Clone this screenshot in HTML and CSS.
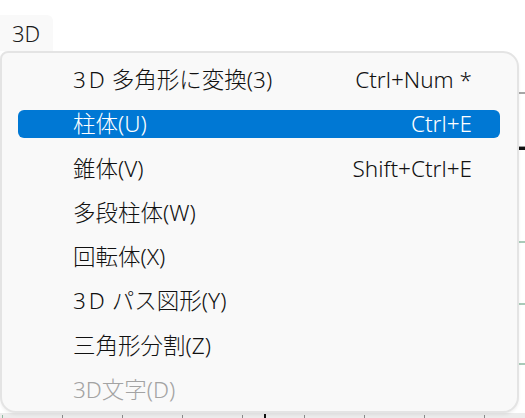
FILE: index.html
```html
<!DOCTYPE html>
<html lang="ja">
<head>
<meta charset="utf-8">
<title>3D menu</title>
<link rel="stylesheet" href="styles.css">
</head>
<body>
<div class="window">
  <div class="menubar">
    <div class="tab">3D</div>
  </div>
  <div class="canvas">
    <div class="rule grey first"></div>
    <div class="rule thin"></div>
    <div class="rule black"></div>
    <div class="rule green g1"></div>
    <div class="rule green g2"></div>
    <div class="rule green g3"></div>
  </div>
  <div class="ruler">
    <span class="tick green-tick"></span>
    <span class="tick"></span>
    <span class="tick"></span>
    <span class="tick"></span>
    <span class="tick"></span>
    <span class="tick dark"></span>
    <span class="tick"></span>
    <span class="tick"></span>
    <span class="tick"></span>
    <span class="tick"></span>
  </div>

  <div class="popup">
    <ul class="items">
      <li class="item"><span class="label"><span class="wide">3D</span>多角形に変換(3)</span><span class="key">Ctrl+Num *</span></li>
      <li class="item active"><span class="label">柱体(U)</span><span class="key">Ctrl+E</span></li>
      <li class="item"><span class="label">錐体(V)</span><span class="key">Shift+Ctrl+E</span></li>
      <li class="item"><span class="label">多段柱体(W)</span></li>
      <li class="item"><span class="label">回転体(X)</span></li>
      <li class="item"><span class="label"><span class="wide">3D</span>パス図形(Y)</span></li>
      <li class="item"><span class="label">三角形分割(Z)</span></li>
      <li class="item disabled"><span class="label">3D文字(D)</span></li>
    </ul>
  </div>
</div>
</body>
</html>
```
FILE: styles.css
```css
html, body {
  margin: 0;
  padding: 0;
  background: #ffffff;
}

body {
  font-family: "Noto Sans", "Noto Sans CJK JP", sans-serif;
  color: #1a1a1a;
}

.window {
  position: relative;
  width: 525px;
  height: 418px;
  overflow: hidden;
  background: #ffffff;
}

.menubar {
  height: 51px;
  box-sizing: border-box;
  padding-top: 15px;
  display: flex;
}

.tab {
  width: 53px;
  height: 36px;
  box-sizing: border-box;
  padding-left: 12px;
  background: #f9f9f9;
  border-top-right-radius: 6px;
  display: flex;
  align-items: center;
  font-size: 22px;
  font-weight: 300;
  line-height: 36px;
}

.canvas {
  height: 362px;
  display: flex;
  flex-direction: column;
}

.rule {
  width: 100%;
  flex: none;
}

.rule.grey {
  height: 2px;
  background: #a6a6a6;
}

.rule.first {
  margin-top: 41px;
}

.rule.thin {
  height: 1px;
  margin-top: 52px;
  background: #9a9a9a;
}

.rule.black {
  height: 3px;
  background: #111111;
}

.rule.green {
  height: 2px;
  background: #a9cbb9;
}

.rule.g1 { margin-top: 91px; }
.rule.g2 { margin-top: 60px; }
.rule.g3 { margin-top: 58px; }

.ruler {
  height: 5px;
  background: #ececec;
  display: flex;
  align-items: flex-end;
  gap: 59px;
  padding-left: 2px;
}

.tick {
  width: 1px;
  height: 3px;
  background: #8a8a8a;
  flex: none;
}

.tick.green-tick {
  background: #8fb8a0;
}

.tick.dark {
  background: #111111;
  height: 4px;
  width: 2px;
  margin-left: -38px;
  margin-right: -21px;
}

.popup {
  position: absolute;
  left: 0;
  top: 51px;
  width: 519px;
  height: 362px;
  box-sizing: border-box;
  background: #f9f9f9;
  border: 2px solid #e4e4e4;
  border-radius: 8px 16px 16px 16px;
  box-shadow: 0 2px 3px rgba(0, 0, 0, 0.06);
}

.items {
  list-style: none;
  margin: 0;
  padding: 13px 17px 0 16px;
  display: flex;
  flex-direction: column;
  gap: 16.3px;
}

.item {
  height: 28px;
  box-sizing: border-box;
  padding: 0 28px 0 55px;
  display: flex;
  justify-content: space-between;
  align-items: center;
  border-radius: 6px;
  font-size: 22.5px;
  font-weight: 300;
  line-height: 28px;
  white-space: nowrap;
  color: #111111;
}

.wide {
  letter-spacing: 3px;
  margin-right: 4px;
}

.item.active {
  background: #0078d4;
  color: #ffffff;
}

.item.disabled {
  color: #a3a3a3;
}
```
